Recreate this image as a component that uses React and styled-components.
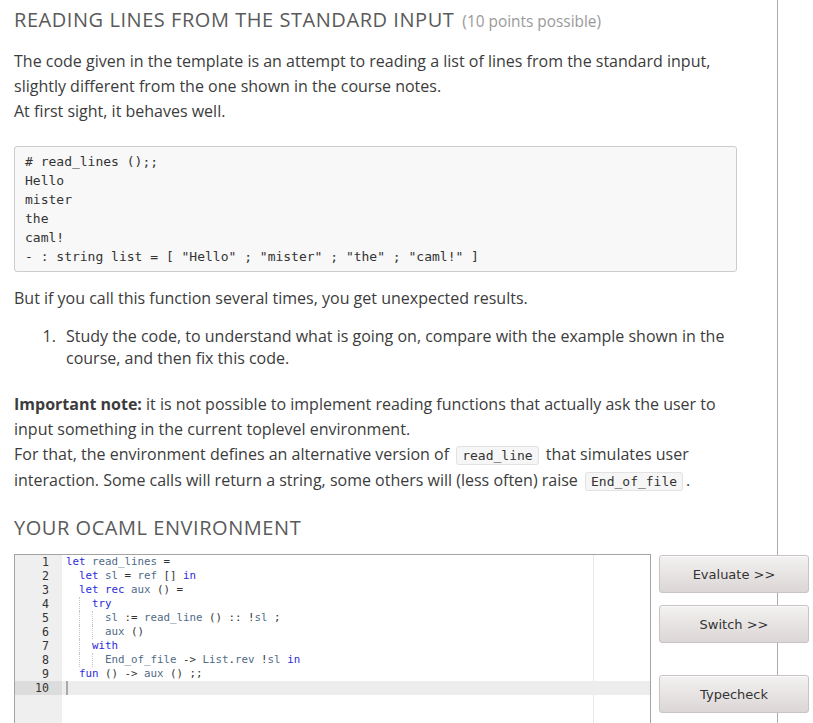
import React from "react";
import styled, { createGlobalStyle } from "styled-components";

const Global = createGlobalStyle`
  html, body { margin: 0; padding: 0; background: #fff; }
  body { font-family: "Open Sans", "Noto Sans", sans-serif; color: #3c3c3c; }
`;

const Page = styled.div`
  width: 778px;
  box-sizing: border-box;
  min-height: 100vh;
  border-right: 1px solid #ababab;
  padding: 6px 0 0 14px;
`;

const Title = styled.h2`
  margin: 0;
  font-size: 20px;
  font-weight: 400;
  line-height: 28px;
  letter-spacing: 0.55px;
  text-transform: uppercase;
  color: #5a5a5a;
`;

const Points = styled.span`
  margin-left: 8px;
  font-size: 15.4px;
  letter-spacing: 0;
  text-transform: none;
  color: #9a9a9a;
`;

const Para = styled.p`
  margin: ${(p) => p.$top || 0}px 0 0 0;
  font-size: 16px;
  line-height: 25px;
  width: 740px;
`;

const Pre = styled.pre`
  margin: 22.5px 0 0 0;
  width: 723px;
  box-sizing: border-box;
  padding: 5px 10px;
  background: #f8f8f8;
  border: 1px solid #cccccc;
  border-radius: 3px;
  font-family: "DejaVu Sans Mono", "Liberation Mono", monospace;
  font-size: 13px;
  line-height: 19px;
  color: #333;
`;

const List = styled.ol`
  margin: 14.5px 0 0 0;
  padding-left: 46px;
  font-size: 16px;
  line-height: 22px;
  width: 696px;
`;

const Item = styled.li`
  padding-left: 6px;
`;

const Code = styled.code`
  font-family: "DejaVu Sans Mono", "Liberation Mono", monospace;
  font-size: 13px;
  background: #f6f6f6;
  border: 1px solid #e2e2e2;
  border-radius: 3px;
  padding: 1px 5px;
  margin: 0 3px;
  color: #333;
`;

const Section = styled.h3`
  margin: 20px 0 0 0;
  font-size: 20px;
  font-weight: 400;
  line-height: 28px;
  letter-spacing: 0.55px;
  text-transform: uppercase;
  color: #5a5a5a;
`;

const EnvRow = styled.div`
  display: flex;
  align-items: flex-start;
  gap: 8px;
  margin-top: 12.5px;
  width: 795px;
`;

const Editor = styled.div`
  display: flex;
  width: 637px;
  height: 180px;
  box-sizing: border-box;
  border: 1px solid #a3a3a3;
  border-bottom: none;
  background: #fff;
  font-family: "DejaVu Sans Mono", "Liberation Mono", monospace;
  font-size: 10.8px;
  line-height: 14px;
  position: relative;
  overflow: hidden;
`;

const Gutter = styled.div`
  width: 47px;
  flex: none;
  background: #efefef;
  color: #333;
  text-align: right;
  font-size: 11.6px;
`;

const Num = styled.div`
  height: 14px;
  padding-right: 13px;
  background: ${(p) => (p.$active ? "#dcdcdc" : "transparent")};
`;

const Lines = styled.div`
  flex: 1;
  position: relative;
`;

const Line = styled.div`
  height: 14px;
  padding-left: 4px;
  white-space: pre;
  color: #333;
  background: ${(p) => (p.$active ? "#ededed" : "transparent")};
  position: relative;
`;

const Margin = styled.div`
  position: absolute;
  top: 0;
  bottom: 0;
  left: 531px;
  width: 1px;
  background: #e6e6e6;
`;

const Guide = styled.span`
  position: absolute;
  top: 0;
  height: 14px;
  left: ${(p) => p.$x}px;
  border-left: 1px dotted #c8c8c8;
`;

const Cursor = styled.span`
  display: inline-block;
  width: 2px;
  height: 14px;
  background: #aaa;
  vertical-align: top;
`;

const Kw = styled.span`
  color: #2b2bdc;
`;
const Id = styled.span`
  color: #4f6b88;
`;

const Buttons = styled.div`
  display: flex;
  flex-direction: column;
  gap: 12px;
  padding-top: 1px;
`;

const Button = styled.button`
  width: 150px;
  height: 38px;
  margin-top: ${(p) => p.$top || 0}px;
  border: 1px solid #c9c3c3;
  border-radius: 3px;
  background: linear-gradient(#f3f1f1, #dcd6d6);
  font-family: "DejaVu Sans", Verdana, sans-serif;
  font-size: 13px;
  color: #333;
  box-shadow: inset 0 1px 0 #fafafa;
  cursor: pointer;
`;

const code = [
  { g: [], c: (<><Kw>let</Kw> <Id>read_lines</Id> =</>) },
  { g: [], c: (<>  <Kw>let</Kw> <Id>sl</Id> = <Id>ref</Id> [] <Kw>in</Kw></>) },
  { g: [], c: (<>  <Kw>let</Kw> <Kw>rec</Kw> <Id>aux</Id> () =</>) },
  { g: [17], c: (<>    <Kw>try</Kw></>) },
  { g: [17, 30], c: (<>      <Id>sl</Id> := <Id>read_line</Id> () :: !<Id>sl</Id> ;</>) },
  { g: [17, 30], c: (<>      <Id>aux</Id> ()</>) },
  { g: [17], c: (<>    <Kw>with</Kw></>) },
  { g: [17, 30], c: (<>      <Id>End_of_file</Id> -&gt; <Id>List</Id>.<Id>rev</Id> !<Id>sl</Id> <Kw>in</Kw></>) },
  { g: [], c: (<>  <Kw>fun</Kw> () -&gt; <Id>aux</Id> () ;;</>) },
  { g: [], c: <Cursor />, active: true },
];

export default function App() {
  return (
    <>
      <Global />
      <Page>
        <Title>
          Reading lines from the standard input
          <Points>(10 points possible)</Points>
        </Title>
        <Para $top={12.5}>
          The code given in the template is an attempt to reading a list of lines from the standard input,
          slightly different from the one shown in the course notes.
          <br />
          At first sight, it behaves well.
        </Para>
        <Pre>{`# read_lines ();;
Hello
mister
the
caml!
- : string list = [ "Hello" ; "mister" ; "the" ; "caml!" ]`}</Pre>
        <Para $top={13.5}>But if you call this function several times, you get unexpected results.</Para>
        <List>
          <Item>
            Study the code, to understand what is going on, compare with the example shown in the
            course, and then fix this code.
          </Item>
        </List>
        <Para $top={22.5}>
          <strong>Important note:</strong> it is not possible to implement reading functions that actually ask the user to
          input something in the current toplevel environment.
          <br />
          For that, the environment defines an alternative version of <Code>read_line</Code> that simulates user
          interaction. Some calls will return a string, some others will (less often) raise <Code>End_of_file</Code>.
        </Para>
        <Section>Your OCaml environment</Section>
        <EnvRow>
          <Editor>
            <Gutter>
              {code.map((l, i) => (
                <Num key={i} $active={l.active}>{i + 1}</Num>
              ))}
            </Gutter>
            <Lines>
              <Margin />
              {code.map((l, i) => (
                <Line key={i} $active={l.active}>
                  {l.g.map((x) => (
                    <Guide key={x} $x={x} />
                  ))}
                  {l.c}
                </Line>
              ))}
            </Lines>
          </Editor>
          <Buttons>
            <Button>Evaluate &gt;&gt;</Button>
            <Button>Switch &gt;&gt;</Button>
            <Button $top={20}>Typecheck</Button>
          </Buttons>
        </EnvRow>
      </Page>
    </>
  );
}
